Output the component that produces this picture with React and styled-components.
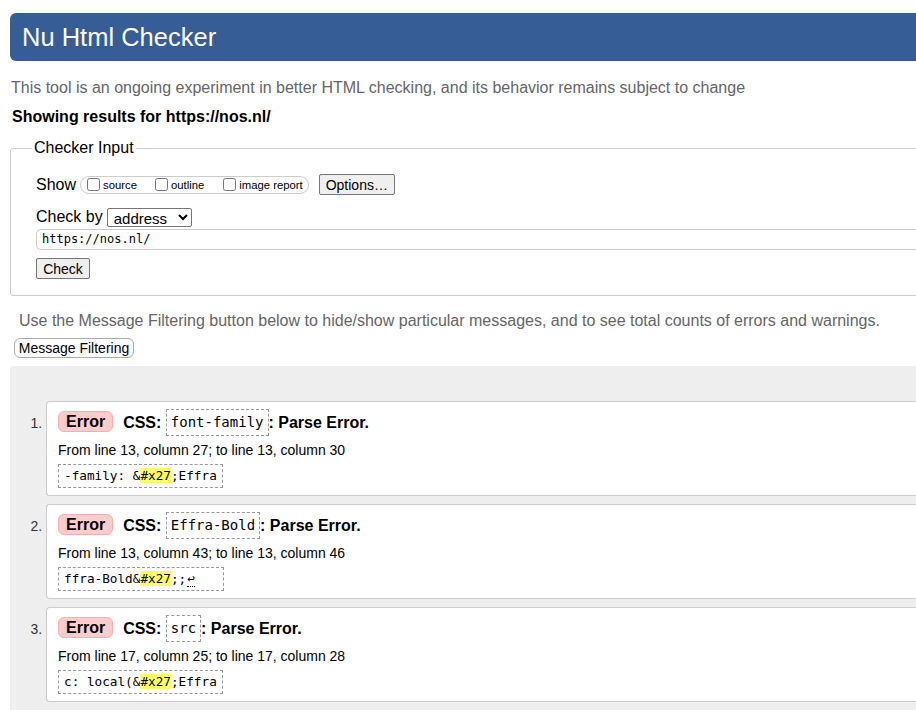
import React from "react";
import styled, { createGlobalStyle } from "styled-components";

const GlobalStyle = createGlobalStyle`
  html, body {
    margin: 0;
    overflow: hidden;
    background: #fff;
  }
  body {
    font-family: "Liberation Sans", Arial, sans-serif;
    color: #000;
  }
`;

const Page = styled.div`
  width: 1010px;
  padding: 13px 0 0 10px;
  box-sizing: border-box;
`;

const Header = styled.h1`
  margin: 0;
  height: 48px;
  background: #365d95;
  border-radius: 6px 0 0 6px;
  color: #fff;
  font-size: 25.5px;
  font-weight: normal;
  line-height: 48px;
  padding-left: 12px;
`;

const Intro = styled.p`
  margin: 17px 0 0 1px;
  font-size: 16px;
  line-height: 20px;
  color: #666;
`;

const ResultsFor = styled.p`
  margin: 9px 0 0 2px;
  font-size: 16px;
  line-height: 20px;
  font-weight: bold;
`;

const InputBox = styled.fieldset`
  margin: 12px 0 0 0;
  padding: 0 0 16px 25px;
  border: 1px solid #ccc;
  border-radius: 3px;
`;

const Legend = styled.legend`
  margin-left: -4px;
  padding: 0 2px;
  font-size: 16px;
  line-height: 18px;
`;

const Row = styled.div`
  display: flex;
  align-items: center;
  height: ${(p) => p.$h || 20}px;
  margin-top: ${(p) => p.$top || 0}px;
  font-size: 16px;
`;

const Label = styled.span`
  margin-right: 4px;
`;

const CheckGroup = styled.span`
  display: inline-flex;
  align-items: center;
  height: 16px;
  padding: 0 5px 0 6px;
  border: 1px solid #ccc;
  border-radius: 9px;
  white-space: nowrap;
`;

const CheckItem = styled.label`
  display: inline-flex;
  align-items: center;
  font-size: 11.3px;
  white-space: nowrap;
  margin-right: ${(p) => p.$gap || 0}px;
  input {
    width: 13px;
    height: 13px;
    margin: 0 3px 0 0;
  }
`;

const Button = styled.button`
  font-family: "Liberation Sans", Arial, sans-serif;
  font-size: 14px;
  height: ${(p) => p.$h || 20}px;
  padding: 0 6px;
  background: #efefef;
  border: 1px solid #767676;
  border-radius: 2px;
  color: #000;
  margin-left: ${(p) => p.$left || 0}px;
  width: ${(p) => (p.$w ? p.$w + "px" : "auto")};
`;

const Select = styled.select`
  font-family: "Liberation Sans", Arial, sans-serif;
  font-size: 15px;
  height: 19px;
  width: 85px;
  padding: 0 0 0 2px;
  border: 1px solid #767676;
  border-radius: 2px;
  background: #fff;
  color: #000;
`;

const UrlInput = styled.div`
  margin-top: 2px;
  height: 21px;
  box-sizing: border-box;
  border: 1px solid #ccc;
  border-right: none;
  border-radius: 5px 0 0 5px;
  padding-left: 5px;
  font-family: "DejaVu Sans Mono", monospace;
  font-size: 12px;
  line-height: 19px;
  color: #000;
`;

const FilterNote = styled.p`
  margin: 15px 0 0 9px;
  font-size: 16px;
  line-height: 20px;
  color: #666;
`;

const FilterButton = styled.button`
  margin: 7px 0 0 4px;
  height: 20px;
  width: 120px;
  padding: 0;
  background: #fff;
  border: 1px solid #aaa;
  border-radius: 6px;
  font-family: "Liberation Sans", Arial, sans-serif;
  font-size: 14px;
  color: #000;
  display: block;
`;

const Results = styled.div`
  margin-top: 8px;
  background: #eee;
  border-radius: 4px 0 0 0;
  padding: 35px 0 40px 0;
`;

const Messages = styled.ol`
  margin: 0;
  padding-left: 36px;
  font-size: 14px;
  color: #333;
`;

const Message = styled.li`
  background: #fff;
  border: 1px solid #ccc;
  border-right: none;
  border-radius: 4px 0 0 4px;
  padding: 7px 0 7px 11px;
  margin-bottom: 8px;
  &::marker {
    font-family: "Liberation Sans", Arial, sans-serif;
  }
`;

const Heading = styled.p`
  margin: 0;
  height: 27px;
  line-height: 27px;
  font-size: 16px;
  font-weight: bold;
  color: #000;
`;

const Badge = styled.strong`
  display: inline-block;
  height: 19px;
  line-height: 19px;
  padding: 0 7px;
  background: #fcc;
  border: 1px solid #f0b0b0;
  border-radius: 6px;
  margin-right: 10px;
  vertical-align: 1px;
`;

const Code = styled.code`
  display: inline-block;
  height: 25px;
  line-height: 25px;
  padding: 0 4px;
  border: 1px dashed #999;
  font-family: "DejaVu Sans Mono", monospace;
  font-size: 14px;
  font-weight: normal;
  vertical-align: top;
`;

const Location = styled.p`
  margin: 5px 0 0 0;
  font-size: 14px;
  line-height: 18px;
  color: #000;
`;

const Extract = styled.code`
  display: inline-block;
  margin-top: 5px;
  height: 22px;
  line-height: 22px;
  padding: 0 5px;
  border: 1px dashed #999;
  font-family: "DejaVu Sans Mono", monospace;
  font-size: 12.7px;
  color: #000;
`;

const Mark = styled.b`
  font-weight: normal;
  background: #ff6;
`;

const Lf = styled.span`
  border-bottom: 1px dotted #000;
  margin-left: 1px;
`;

const messages = [
  {
    code: "font-family",
    loc: "From line 13, column 27; to line 13, column 30",
    pre: "-family: &",
    post: ";Effra",
  },
  {
    code: "Effra-Bold",
    loc: "From line 13, column 43; to line 13, column 46",
    pre: "ffra-Bold&",
    post: ";;",
    lf: true,
  },
  {
    code: "src",
    loc: "From line 17, column 25; to line 17, column 28",
    pre: "c: local(&",
    post: ";Effra",
  },
];

export default function App() {
  return (
    <>
      <GlobalStyle />
      <Page>
        <Header>Nu Html Checker</Header>
        <Intro>
          This tool is an ongoing experiment in better HTML checking, and its
          behavior remains subject to change
        </Intro>
        <ResultsFor>Showing results for https://nos.nl/</ResultsFor>

        <InputBox>
          <Legend>Checker Input</Legend>
          <Row $top={17} $h={21}>
            <Label>Show</Label>
            <CheckGroup>
              <CheckItem $gap={18}>
                <input type="checkbox" />
                source
              </CheckItem>
              <CheckItem $gap={19}>
                <input type="checkbox" />
                outline
              </CheckItem>
              <CheckItem>
                <input type="checkbox" />
                image report
              </CheckItem>
            </CheckGroup>
            <Button $left={10} $h={21} $w={76}>
              Options…
            </Button>
          </Row>
          <Row $top={12}>
            <Label>Check by</Label>
            <Select defaultValue="address">
              <option value="address">address</option>
            </Select>
          </Row>
          <UrlInput>https://nos.nl/</UrlInput>
          <Row $top={8} $h={21}>
            <Button $w={54} $h={21}>
              Check
            </Button>
          </Row>
        </InputBox>

        <FilterNote>
          Use the Message Filtering button below to hide/show particular
          messages, and to see total counts of errors and warnings.
        </FilterNote>
        <FilterButton>Message Filtering</FilterButton>

        <Results>
          <Messages>
            {messages.map((m) => (
              <Message key={m.code}>
                <Heading>
                  <Badge>Error</Badge>
                  CSS: <Code>{m.code}</Code>: Parse Error.
                </Heading>
                <Location>{m.loc}</Location>
                <Extract>
                  {m.pre}
                  <Mark>#x27</Mark>
                  {m.post}
                  {m.lf && <Lf>↩</Lf>}
                  {m.lf && "\u00a0\u00a0\u00a0"}
                </Extract>
              </Message>
            ))}
          </Messages>
        </Results>
      </Page>
    </>
  );
}
